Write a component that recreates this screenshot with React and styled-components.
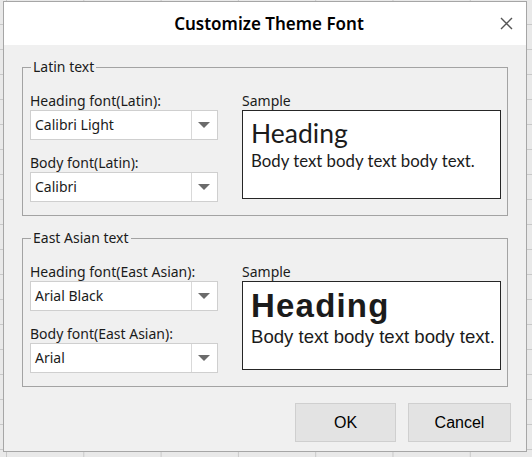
import React from 'react';
import styled, { createGlobalStyle } from 'styled-components';

const GlobalStyle = createGlobalStyle`
  html, body {
    margin: 0;
    padding: 0;
  }
  body {
    width: 532px;
    height: 457px;
    overflow: hidden;
    background-color: #e9e9e9;
    background-image:
      linear-gradient(to right, #c9c9c9 1px, transparent 1px),
      linear-gradient(to bottom, #c9c9c9 1px, transparent 1px);
    background-size: 77.3px 25px;
    background-position: 6px 24px;
  }
`;

const Dialog = styled.div`
  margin: 1px 0 0 3px;
  width: 524px;
  height: 451px;
  box-sizing: border-box;
  border: 1px solid #a6a6a6;
  background: #f0f0f0;
  display: flex;
  flex-direction: column;
  font-family: "Noto Sans", "Open Sans", sans-serif;
  color: #1b1b1b;
`;

const TitleBar = styled.div`
  height: 43px;
  background: #ffffff;
  display: grid;
  grid-template-columns: 1fr auto 1fr;
  align-items: center;
  padding-left: 8px;
`;

const Title = styled.div`
  grid-column: 2;
  font-size: 17px;
  font-weight: 600;
  color: #000;
`;

const CloseButton = styled.button`
  grid-column: 3;
  justify-self: end;
  margin-right: 13px;
  width: 14px;
  height: 14px;
  padding: 0;
  border: 0;
  background: transparent;
  display: flex;
  align-items: center;
  justify-content: center;
`;

const Body = styled.div`
  padding: 12px 18px 0;
  display: flex;
  flex-direction: column;
  gap: 12px;
`;

const Group = styled.fieldset`
  margin: 0;
  min-width: 0;
  padding: 14px 6px 13px 7px;
  border: 1px solid #a3a3a3;
  display: grid;
  grid-template-columns: 188px 259px;
  column-gap: 24px;
`;

const Legend = styled.legend`
  padding: 0 2px;
  margin-left: 1px;
  font-size: 14px;
  line-height: 20px;
`;

const Column = styled.div`
  display: flex;
  flex-direction: column;
  gap: 13px;
`;

const Field = styled.div`
  display: flex;
  flex-direction: column;
`;

const Label = styled.div`
  font-size: 14px;
  line-height: 19px;
  white-space: nowrap;
`;

const Select = styled.div`
  height: 30px;
  box-sizing: border-box;
  border: 1px solid #cfcfcf;
  background: #ffffff;
  display: flex;
`;

const SelectValue = styled.div`
  flex: 1;
  padding-left: 4px;
  font-size: 14px;
  line-height: 28px;
`;

const SelectArrow = styled.div`
  width: 23px;
  border-left: 1px solid #d9d9d9;
  display: flex;
  align-items: center;
  justify-content: center;
  padding-right: 2px;
`;

const SampleBox = styled.div`
  height: 89px;
  box-sizing: border-box;
  border: 1px solid #262626;
  background: #ffffff;
  padding: ${(p) => (p.$variant === 'asian' ? '5px 8px' : '6px 8px')};
  color: #1b1b1b;
  overflow: hidden;
`;

const SampleHeading = styled.div`
  white-space: nowrap;
  ${(p) =>
    p.$variant === 'asian'
      ? `
    font-family: "Liberation Sans", Arial, sans-serif;
    font-weight: 900;
    font-size: 33px;
    letter-spacing: 1.2px;
    line-height: 38px;
  `
      : `
    font-family: Lato, "Noto Sans", sans-serif;
    font-weight: 400;
    font-size: 26.5px;
    line-height: 32px;
  `}
`;

const SampleBody = styled.div`
  white-space: nowrap;
  ${(p) =>
    p.$variant === 'asian'
      ? `
    font-family: "Liberation Sans", Arial, sans-serif;
    font-size: 18.6px;
    line-height: 24px;
  `
      : `
    font-family: Lato, "Noto Sans", sans-serif;
    font-size: 16.8px;
    line-height: 24px;
  `}
`;

const Footer = styled.div`
  display: flex;
  justify-content: flex-end;
  gap: 12px;
  padding: 16px 15px 0 0;
`;

const Button = styled.button`
  width: ${(p) => p.$width}px;
  height: 39px;
  box-sizing: border-box;
  border: 1px solid #cfcfcf;
  background: #e3e3e3;
  font-family: "Liberation Sans", Arial, sans-serif;
  font-size: 16px;
  color: #000;
  padding: 0;
`;

const Arrow = () => (
  <svg width="12" height="6" viewBox="0 0 12 6">
    <path d="M0 0 H12 L6 6 Z" fill="#6b6b6b" />
  </svg>
);

const FontSelect = ({ label, value }) => (
  <Field>
    <Label>{label}</Label>
    <Select>
      <SelectValue>{value}</SelectValue>
      <SelectArrow>
        <Arrow />
      </SelectArrow>
    </Select>
  </Field>
);

const FontGroup = ({ title, heading, body, variant }) => (
  <Group>
    <Legend>{title}</Legend>
    <Column>
      <FontSelect label={heading.label} value={heading.value} />
      <FontSelect label={body.label} value={body.value} />
    </Column>
    <Field>
      <Label>Sample</Label>
      <SampleBox $variant={variant}>
        <SampleHeading $variant={variant}>Heading</SampleHeading>
        <SampleBody $variant={variant}>Body text body text body text.</SampleBody>
      </SampleBox>
    </Field>
  </Group>
);

const App = () => (
  <>
    <GlobalStyle />
    <Dialog>
      <TitleBar>
        <Title>Customize Theme Font</Title>
        <CloseButton aria-label="Close">
          <svg width="13" height="13" viewBox="0 0 13 13">
            <path d="M1 1 L12 12 M12 1 L1 12" stroke="#555" strokeWidth="1.4" />
          </svg>
        </CloseButton>
      </TitleBar>
      <Body>
        <FontGroup
          title="Latin text"
          variant="latin"
          heading={{ label: 'Heading font(Latin):', value: 'Calibri Light' }}
          body={{ label: 'Body font(Latin):', value: 'Calibri' }}
        />
        <FontGroup
          title="East Asian text"
          variant="asian"
          heading={{ label: 'Heading font(East Asian):', value: 'Arial Black' }}
          body={{ label: 'Body font(East Asian):', value: 'Arial' }}
        />
      </Body>
      <Footer>
        <Button $width={101}>OK</Button>
        <Button $width={103}>Cancel</Button>
      </Footer>
    </Dialog>
  </>
);

export default App;
